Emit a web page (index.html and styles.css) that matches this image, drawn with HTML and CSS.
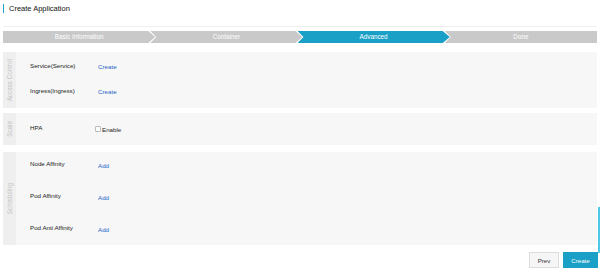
FILE: index.html
```html
<!DOCTYPE html>
<html lang="en">
<head>
	<meta charset="UTF-8">
	<title>Create Application</title>
	<link rel="stylesheet" href="styles.css">
</head>
<body>
	<div class="page">
		<div class="header">
			<h1 class="title">Create Application</h1>
		</div>

		<div class="steps">
			<div class="step">Basic Information</div>
			<div class="step">Container</div>
			<div class="step active">Advanced</div>
			<div class="step">Done</div>
		</div>

		<div class="section access">
			<div class="side"><span>Access Control</span></div>
			<div class="rows">
				<div class="row">
					<span class="label">Service(Service)</span>
					<a class="link">Create</a>
				</div>
				<div class="row">
					<span class="label">Ingress(Ingress)</span>
					<a class="link">Create</a>
				</div>
			</div>
		</div>

		<div class="section scale">
			<div class="side"><span>Scale</span></div>
			<div class="rows">
				<div class="row">
					<span class="label">HPA</span>
					<label class="check"><span class="box"></span>Enable</label>
				</div>
			</div>
		</div>

		<div class="section sched">
			<div class="side"><span>Scheduling</span></div>
			<div class="rows">
				<div class="row">
					<span class="label">Node Affinity</span>
					<a class="link">Add</a>
				</div>
				<div class="row">
					<span class="label">Pod Affinity</span>
					<a class="link">Add</a>
				</div>
				<div class="row">
					<span class="label">Pod Anti Affinity</span>
					<a class="link">Add</a>
				</div>
			</div>
		</div>

		<div class="footer">
			<button class="btn prev">Prev</button>
			<button class="btn create">Create</button>
		</div>
	</div>
	<div class="scroll-hint"></div>
</body>
</html>
```

FILE: styles.css
```css
* {
	margin: 0;
	padding: 0;
	box-sizing: border-box;
	font-family: "Liberation Sans", Arial, sans-serif;
}

body {
	background: #fff;
	color: #333;
	width: 600px;
	height: 275px;
	overflow: hidden;
	position: relative;
}

.page {
	padding: 0 3px;
}

.header {
	height: 27px;
	border-bottom: 1px solid #efefef;
	padding-top: 4px;
}

.title {
	font-size: 7.5px;
	font-weight: normal;
	color: #111;
	line-height: 9px;
	border-left: 1px solid #1a9fc7;
	padding-left: 5px;
}

.steps {
	display: flex;
	margin-top: 4px;
	height: 12px;
}

.step {
	flex: 1;
	background: #c9c9c9;
	color: #fff;
	font-size: 6.3px;
	line-height: 12px;
	text-align: center;
	margin-left: -5px;
	clip-path: polygon(0 0, calc(100% - 7px) 0, 100% 50%, calc(100% - 7px) 100%, 0 100%, 6px 50%);
}

.step:first-child {
	margin-left: 0;
	clip-path: polygon(0 0, calc(100% - 7px) 0, 100% 50%, calc(100% - 7px) 100%, 0 100%);
}

.step:last-child {
	clip-path: polygon(0 0, 100% 0, 100% 100%, 0 100%, 6px 50%);
}

.step.active {
	background: #1a9fc7;
}

.section {
	display: flex;
	background: #f7f7f7;
}

.side {
	width: 13px;
	background: #efefef;
	display: flex;
	align-items: center;
	justify-content: center;
}

.side span {
	writing-mode: vertical-rl;
	transform: rotate(180deg);
	font-size: 6.3px;
	color: #c4c4c4;
	white-space: nowrap;
}

.rows {
	flex: 1;
	display: flex;
	flex-direction: column;
}

.row {
	display: flex;
	align-items: center;
	padding-left: 14px;
}

.label {
	width: 68px;
	font-size: 6.2px;
	color: #222;
	margin-top: -3px;
}

.link {
	font-size: 6.2px;
	color: #1f5fc8;
}

.access {
	margin-top: 9px;
	padding: 2px 0 4px;
}

.access .side {
	margin: -2px 0 -4px;
}

.access .row {
	height: 25px;
}

.scale {
	margin-top: 5px;
	height: 32px;
}

.scale .row {
	height: 32px;
}

.check {
	display: flex;
	align-items: center;
	font-size: 6.2px;
	color: #222;
	margin-left: -3px;
}

.box {
	width: 6px;
	height: 6px;
	border: 1px solid #bbb;
	background: #fff;
	margin-right: 1px;
	border-radius: 1px;
}

.sched {
	margin-top: 7px;
	padding: 0 0 3px;
}

.sched .side {
	margin-bottom: -3px;
}

.sched .rows {
	gap: 6px;
}

.sched .row {
	height: 26px;
}

.footer {
	display: flex;
	justify-content: flex-end;
	gap: 4px;
	margin-top: 7px;
	margin-right: -1px;
}

.btn {
	height: 16px;
	font-size: 6.2px;
	border: 1px solid #ddd;
	cursor: pointer;
}

.prev {
	width: 30px;
	background: #f6f6f6;
	color: #333;
}

.create {
	width: 35px;
	background: #1a9fc7;
	border-color: #1a9fc7;
	color: #fff;
}

.scroll-hint {
	position: absolute;
	right: 0;
	top: 207px;
	width: 2px;
	height: 46px;
	background: #4fc8e8;
}
```
